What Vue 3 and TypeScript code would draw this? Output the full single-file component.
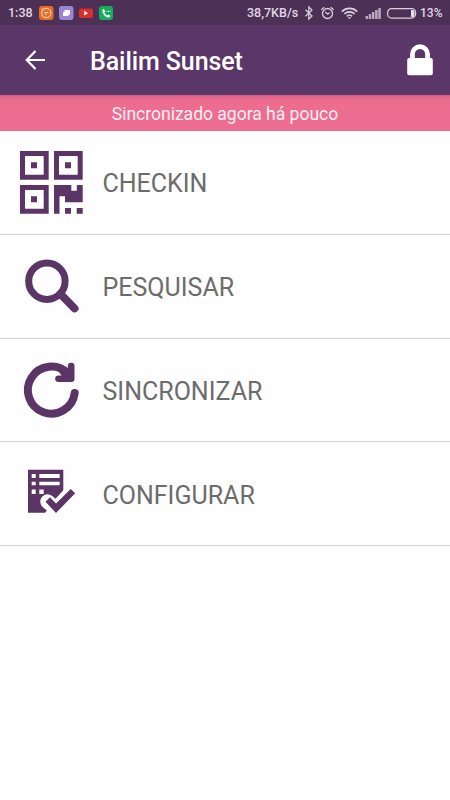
<script setup lang="ts">
type IconName = 'qr' | 'search' | 'sync' | 'config'
interface MenuItem {
  label: string
  icon: IconName
}
const items: MenuItem[] = [
  { label: 'CHECKIN', icon: 'qr' },
  { label: 'PESQUISAR', icon: 'search' },
  { label: 'SINCRONIZAR', icon: 'sync' },
  { label: 'CONFIGURAR', icon: 'config' },
]
const bars: number[] = [3, 5, 7, 9, 11]
</script>

<template>
  <div class="screen">
    <div class="status">
      <span class="clock">1:38</span>
      <svg class="apps" width="75" height="16" viewBox="0 0 75 16">
        <rect x="0" y="1" width="14.500" height="14" rx="3" fill="#e96a24" />
        <circle cx="7.300" cy="8" r="4.600" fill="none" stroke="#f8cfae" stroke-width="1.200" />
        <path d="M5 7.500h4.500M7 7.500v2.500M2.500 3.500l2 1" stroke="#f8cfae" fill="none" />
        <rect x="20" y="1" width="14.500" height="14" rx="3" fill="#9b86d3" />
        <path d="M25.500 5h5.500v4.500h-1.500v1.500h-5.500V7h1.500z" fill="#fff" />
        <rect x="40" y="3.500" width="14" height="9.500" rx="2" fill="#d9302c" />
        <path d="M45.200 5.800v4.800l4-2.400z" fill="#fff" />
        <rect x="60" y="1" width="14" height="14" rx="3" fill="#17ac5b" />
        <path d="M63.500 4.500l1.500-.5 1.300 2.500-1 1c.7 1.500 1.500 2.300 3 3l1-1 2.200 1.300-.6 1.500c-4 1-8.400-3.800-7.400-7.800z" fill="#fff" />
        <path d="M67.500 6.300h4" stroke="#fff" stroke-dasharray="1 .6" />
      </svg>
      <span class="speed">38,7KB/s</span>
      <svg class="signals" width="114" height="18" viewBox="0 0 114 18" fill="none" stroke="#d9d0dc">
        <path d="M2.500 5.800l6.500 6.200-3.200 3V3l3.200 3-6.500 6.200" stroke-width="1.200" />
        <circle cx="24.500" cy="9.500" r="5" stroke-width="1.300" />
        <path d="M22.200 8l2.300 2 2.200-1.200M18.300 5.800l3-2.500M30.700 5.800l-3-2.500" stroke-width="1.200" />
        <path d="M38.800 7.600c4.300-4.300 11.200-4.300 15.400 0M41.300 10c3-2.900 7.500-2.900 10.400 0M43.800 12.300c1.600-1.500 3.800-1.500 5.400 0" stroke-width="1.600" />
        <path d="M44.800 13.200l1.700 2 1.700-2z" fill="#d9d0dc" stroke="none" />
        <rect v-for="(h, i) in bars" :key="h" :x="62.500 + i * 3.200" :y="15 - h" width="2.500" :height="h" fill="#b9a9bf" stroke="none" />
        <rect x="84.600" y="4.600" width="28" height="9.500" rx="4" stroke-width="1.200" />
        <path d="M108 6h1.500a2 2 0 0 1 2 2v3a2 2 0 0 1-2 2H108z" fill="#e6dfe8" stroke="none" />
      </svg>
      <span class="percent">13%</span>
    </div>
    <header class="toolbar">
      <svg class="back" width="22" height="22" viewBox="0 0 22 22" fill="none" stroke="#fff" stroke-width="2.200">
        <path d="M21 11H3.300M11.500 2L2.700 11l8.800 9" />
      </svg>
      <h1 class="title">Bailim Sunset</h1>
      <svg class="lock" width="26" height="32" viewBox="0 0 26 32">
        <path d="M5.400 15V10.300a7.600 7.600 0 0 1 15.200 0V15" fill="none" stroke="#fff" stroke-width="4.800" />
        <rect x=".2" y="14" width="25.600" height="17.200" rx="2" fill="#fff" />
      </svg>
    </header>
    <div class="banner">Sincronizado agora há pouco</div>
    <nav class="menu">
      <div v-for="item in items" :key="item.icon" class="row">
        <svg class="icon" width="64" height="64" viewBox="0 0 64 64" fill="#5b3566">
          <g v-if="item.icon === 'qr'" transform="translate(0 .7)">
            <path fill-rule="evenodd" d="M1 .3h28.700V29H1zM6 5.300V24h18.700V5.300zM12 11.600h6v6h-6z" />
            <path fill-rule="evenodd" d="M35 .3h28.700V29H35zM40 5.300V24h18.700V5.300zM46 11.600h6v6h-6z" />
            <path fill-rule="evenodd" d="M1 34.300h28.700V63H1zM6 39.300V58h18.700V39.300zM12 45.600h6v6h-6z" />
            <path d="M35 34.300h17.300v5.700h5.500v-5.700h5.900V51.500H46v-6h-5.500V63H35zM46 57.300h6V63h-6zM57.700 57.300h6V63h-6z" />
          </g>
          <g v-else-if="item.icon === 'search'" fill="none" stroke="#5b3566">
            <circle cx="27.900" cy="27.200" r="18.200" stroke-width="7" />
            <path d="M41.500 40L55.600 54.400" stroke-width="7.800" stroke-linecap="round" />
          </g>
          <g v-else-if="item.icon === 'sync'" fill="none" stroke="#5b3566" stroke-linecap="round" stroke-linejoin="round">
            <path d="M55.700 35A23.500 23.500 0 1 1 49 15.500" stroke-width="8" />
            <path d="M52.200 8v12.700H39.500" stroke-width="6.600" />
            <path d="M41 14l11-5v11h-7z" fill="#5b3566" stroke-width="1.500" />
          </g>
          <g v-else>
            <path d="M9 7.750h35.300V29L26 50.750H9z" />
            <path d="M12.700 12h4v4h-4zM20.300 12h20.400v4H20.300zM12.700 19.700h4v3.500h-4zM20.300 19.700h20.400v3.500H20.300zM12.700 27.500h4V32h-4zM20.300 27.500h4.400V32h-4.400z" fill="#fff" />
            <path d="M28.500 39.500l8.500 7.500 15.700-17" fill="none" stroke="#fff" stroke-width="14.500" stroke-linejoin="round" stroke-linecap="round" />
            <path d="M26.500 39.800l4.500-4.500 6 6.300 14.700-14.700 4.500 4.300L37 51z" />
          </g>
        </svg>
        <span class="label">{{ item.label }}</span>
      </div>
    </nav>
  </div>
</template>

<style>
body {
  margin: 0;
  background: #fefefe;
}
</style>

<style scoped>
.screen {
  width: 450px;
  height: 800px;
  overflow: hidden;
  background: #fefefe;
  font-family: Roboto, "Liberation Sans", sans-serif;
}
.status {
  display: flex;
  align-items: center;
  height: 25px;
  background: #4c3055;
  color: #e0d8e3;
  font-size: 12.500px;
  font-weight: 500;
  white-space: nowrap;
}
.clock {
  width: 31px;
  padding-left: 8px;
}
.apps {
  flex: none;
}
.speed {
  width: 56px;
  margin-left: 133px;
}
.signals {
  flex: none;
}
.percent {
  margin-left: 3px;
  font-size: 12px;
}
.toolbar {
  display: flex;
  align-items: center;
  box-sizing: border-box;
  height: 70px;
  padding: 0 17px 0 24px;
  background: #5b3668;
}
.title {
  flex: 1;
  margin: 3px 0 0 44px;
  color: #fff;
  font-size: 25px;
  font-weight: 500;
  line-height: 30px;
  letter-spacing: -0.080px;
}
.banner {
  height: 36px;
  background: linear-gradient(#cd5f83, #e9698e 3px, #ed6d91 6px);
  color: #fff0f4;
  font-size: 17.500px;
  line-height: 38px;
  text-align: center;
}
.row {
  display: flex;
  align-items: center;
  box-sizing: border-box;
  height: 103.750px;
  padding-left: 19px;
  border-bottom: 1px solid #d4d4d4;
}
.label {
  margin: 3px 0 0 19.500px;
  color: #6c6c6c;
  font-size: 25px;
}
</style>
